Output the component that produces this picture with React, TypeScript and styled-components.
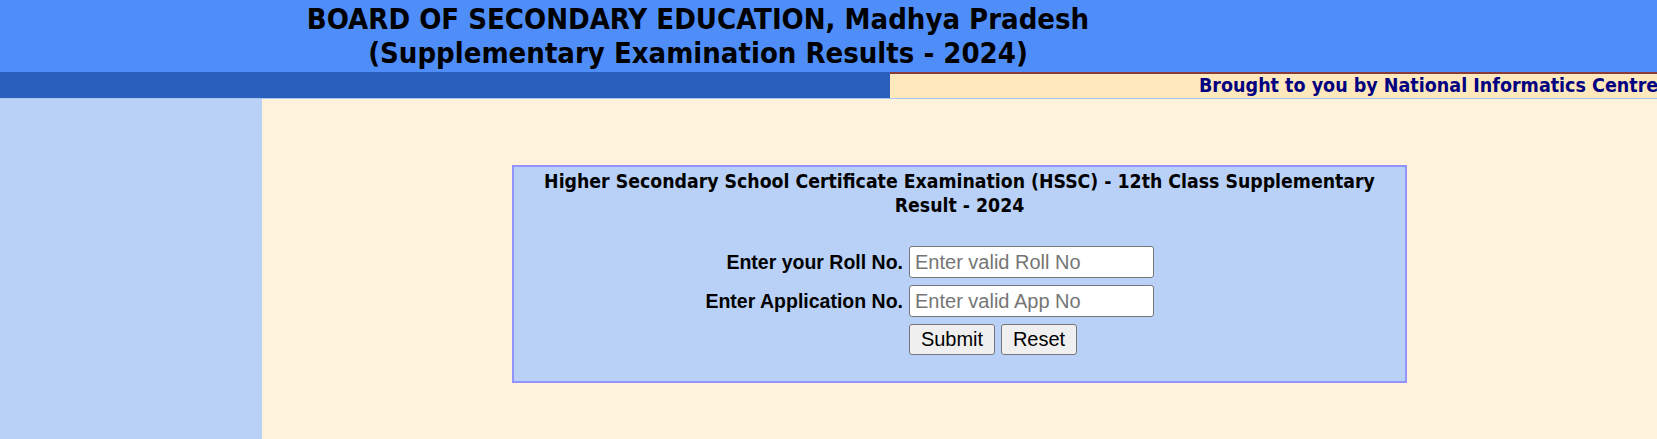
import React from 'react';
import styled, { createGlobalStyle } from 'styled-components';

const GlobalStyle = createGlobalStyle`
  html, body {
    margin: 0;
    padding: 0;
    background: #fff2dc;
  }
  body {
    font-family: 'Liberation Sans', Arial, sans-serif;
  }
`;

const Page = styled.div`
  width: 100%;
  min-height: 439px;
  display: flex;
  flex-direction: column;
`;

const Header = styled.header`
  height: 72px;
  background: #4f8ef8;
  display: flex;
`;

const TitleBlock = styled.div`
  width: 1396px;
  padding-top: 2px;
  text-align: center;
  font-family: 'DejaVu Sans Condensed', 'DejaVu Sans', sans-serif;
  font-weight: bold;
  font-size: 29px;
  line-height: 34px;
  color: #000;
`;

const NavBar = styled.div`
  height: 26px;
  display: flex;
  border-bottom: 1px solid #a9c6f3;
`;

const NavLeft = styled.div`
  width: 890px;
  background: #2b5fbc;
`;

const Ticker = styled.div`
  flex: 1;
  background: #ffe8bb;
  border-top: 2px solid #8c3b3b;
  overflow: hidden;
  white-space: nowrap;
  padding-left: 309px;
  font-family: 'DejaVu Sans Condensed', 'DejaVu Sans', sans-serif;
  font-weight: bold;
  font-size: 19.5px;
  line-height: 23px;
  color: #000080;
`;

const Body = styled.div`
  flex: 1;
  display: flex;
`;

const Sidebar = styled.aside`
  width: 262px;
  background: #b9d1f7;
`;

const Main = styled.main`
  flex: 1;
  background: #fff2dc;
  display: flex;
  justify-content: center;
  align-items: flex-start;
  padding-top: 66px;
`;

const FormBox = styled.form`
  width: 891px;
  height: 214px;
  box-sizing: content-box;
  background: #b9d1f7;
  border: 2px solid #9393ff;
`;

const FormTitle = styled.h2`
  margin: 0;
  padding: 3px 30px 0;
  text-align: center;
  font-family: 'DejaVu Sans Condensed', 'DejaVu Sans', sans-serif;
  font-weight: bold;
  font-size: 19.3px;
  line-height: 24px;
  color: #000;
`;

const Fields = styled.div`
  display: grid;
  grid-template-columns: 389px auto;
  column-gap: 6px;
  row-gap: 7px;
  justify-content: start;
  align-items: center;
  margin-top: 28px;
`;

const Label = styled.label`
  text-align: right;
  font-weight: bold;
  font-size: 19.5px;
  color: #000;
`;

const TextInput = styled.input`
  width: 245px;
  height: 32px;
  box-sizing: border-box;
  border: 1px solid #767676;
  border-radius: 3px;
  background: #fff;
  padding: 0 5px;
  font-family: 'Liberation Sans', Arial, sans-serif;
  font-size: 20px;
  color: #000;

  &::placeholder {
    color: #757575;
  }
`;

const Buttons = styled.div`
  grid-column: 2;
  display: flex;
  gap: 6px;
`;

const Button = styled.button<{ $w: number }>`
  width: ${(p) => p.$w}px;
  height: 31px;
  box-sizing: border-box;
  border: 1px solid #767676;
  border-radius: 3px;
  background: #efefef;
  font-family: 'Liberation Sans', Arial, sans-serif;
  font-size: 20px;
  color: #000;
  padding: 0;
`;

export default function App() {
  return (
    <>
      <GlobalStyle />
      <Page>
        <Header>
          <TitleBlock>
            BOARD OF SECONDARY EDUCATION, Madhya Pradesh
            <br />
            (Supplementary Examination Results - 2024)
          </TitleBlock>
        </Header>
        <NavBar>
          <NavLeft />
          <Ticker>Brought to you by National Informatics Centre</Ticker>
        </NavBar>
        <Body>
          <Sidebar />
          <Main>
            <FormBox onSubmit={(e) => e.preventDefault()}>
              <FormTitle>
                Higher Secondary School Certificate Examination (HSSC) - 12th Class Supplementary
                Result - 2024
              </FormTitle>
              <Fields>
                <Label htmlFor="roll">Enter your Roll No.</Label>
                <TextInput id="roll" type="text" placeholder="Enter valid Roll No" />
                <Label htmlFor="app">Enter Application No.</Label>
                <TextInput id="app" type="text" placeholder="Enter valid App No" />
                <Buttons>
                  <Button type="submit" $w={86}>
                    Submit
                  </Button>
                  <Button type="reset" $w={76}>
                    Reset
                  </Button>
                </Buttons>
              </Fields>
            </FormBox>
          </Main>
        </Body>
      </Page>
    </>
  );
}
